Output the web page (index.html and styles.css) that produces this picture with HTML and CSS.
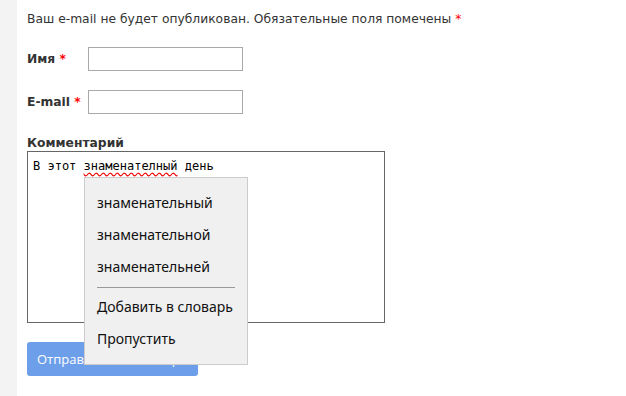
FILE: index.html
```html
<!DOCTYPE html>
<html>
<head>
    <title>Комментарий</title>
    <link rel="stylesheet" href="styles.css">
</head>
<body>
    <div class="page">
        <div class="sidebar"></div>
        <div class="content">
            <p class="notice">Ваш e-mail не будет опубликован. Обязательные поля помечены <span class="req">*</span></p>
            <div class="field">
                <label class="field-label">Имя <span class="req">*</span></label>
                <input type="text" class="field-input">
            </div>
            <div class="field">
                <label class="field-label">E-mail <span class="req">*</span></label>
                <input type="text" class="field-input">
            </div>
            <label class="comment-label">Комментарий</label>
            <div class="comment-box">В этот <span class="misspelled">знаменателный</span> день</div>
            <button class="submit">Отправить комментарий</button>

            <div class="context-menu">
                <div class="menu-item">знаменательный</div>
                <div class="menu-item">знаменательной</div>
                <div class="menu-item">знаменательней</div>
                <div class="menu-sep"></div>
                <div class="menu-item">Добавить в словарь</div>
                <div class="menu-item">Пропустить</div>
            </div>
        </div>
    </div>
</body>
</html>
```

FILE: styles.css
```css
body {
    margin: 0;
    background-color: #fff;
    font-family: "DejaVu Sans", Verdana, sans-serif;
    color: #333;
}

.page {
    display: flex;
    min-height: 396px;
}

.sidebar {
    width: 17px;
    background-color: #f3f3f3;
}

.content {
    position: relative;
    padding: 10px 0 0 10px;
    flex: 1;
}

.notice {
    margin: 0;
    font-size: 12.3px;
    line-height: 18px;
}

.req {
    color: #f00;
}

.field {
    display: flex;
    align-items: center;
    gap: 5px;
    margin-top: 19px;
}

.field-label {
    min-width: 56px;
    font-size: 12.3px;
    font-weight: bold;
}

.field-input {
    width: 155px;
    height: 24px;
    box-sizing: border-box;
    border: 1px solid #a9a9a9;
    margin: 0;
    padding: 2px 4px;
}

.comment-label {
    display: block;
    margin-top: 21px;
    font-size: 12.3px;
    font-weight: bold;
    line-height: 16px;
}

.comment-box {
    width: 358px;
    height: 172px;
    box-sizing: border-box;
    border: 1px solid #666;
    padding: 7px 5px;
    font-family: "DejaVu Sans Mono", monospace;
    font-size: 12px;
    color: #000;
}

.misspelled {
    text-decoration: underline wavy #e00;
    text-decoration-skip-ink: none;
    text-underline-offset: 2px;
}

.submit {
    display: block;
    margin-top: 19px;
    width: 171px;
    height: 34px;
    background-color: #6d9eea;
    color: #fff;
    border: none;
    border-radius: 3px;
    padding: 0 10px;
    text-align: left;
    font-family: "Open Sans", sans-serif;
    font-size: 13px;
    white-space: nowrap;
}

.context-menu {
    position: absolute;
    left: 67px;
    top: 177px;
    width: 164px;
    box-sizing: border-box;
    padding: 9px 0;
    background-color: #f0f0f0;
    border: 1px solid #ccc;
    font-family: "Noto Sans", sans-serif;
    font-size: 14px;
    color: #111;
}

.menu-item {
    height: 32px;
    line-height: 32px;
    padding-left: 12px;
    white-space: nowrap;
}

.menu-sep {
    height: 1px;
    margin: 4px 12px 3px;
    background-color: #999;
}
```
